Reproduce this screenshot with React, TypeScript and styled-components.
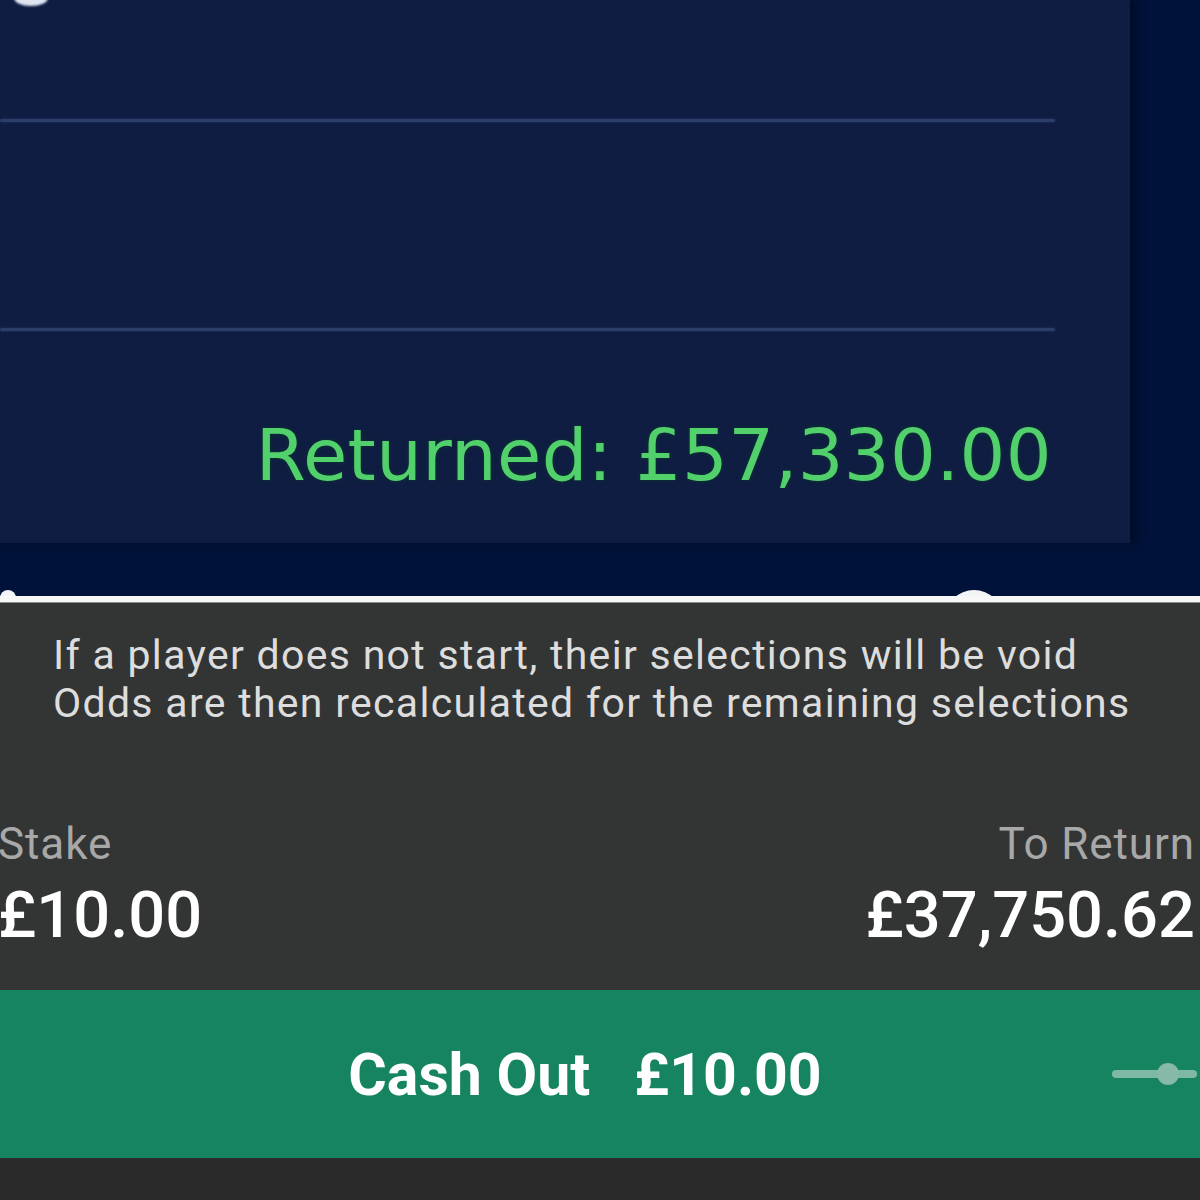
import styled, { createGlobalStyle } from 'styled-components';

const Global = createGlobalStyle`
    html, body {
        margin: 0;
        padding: 0;
        background: #2a2a2a;
    }
    #root {
        width: 1200px;
        height: 1200px;
        overflow: hidden;
    }
`

const Page = styled.div`
    display: flex;
    flex-direction: column;
    width: 1200px;
    height: 1200px;
`

/* upper half: the settled bet card on navy */
const NavyPane = styled.div`
    position: relative;
    display: flex;
    flex-direction: column;
    height: 596px;
    background: #001239;
    overflow: hidden;
`
const Card = styled.div`
    position: relative;
    display: flex;
    flex-direction: column;
    width: 1130px;
    height: 543px;
    background: #0f1d43;
    box-shadow: 6px 0 8px rgba(0, 6, 30, 0.6);
`
const Rule = styled.div<{ $top: number }>`
    margin-top: ${p => p.$top}px;
    margin-right: 75px;
    height: 3px;
    border-radius: 2px;
    background: #2d3d69;
    box-shadow: 0 0 3px rgba(60, 80, 130, 0.5);
`
const Returned = styled.div`
    margin-top: 82px;
    padding-right: 78px;
    text-align: right;
    font-family: "DejaVu Sans", Verdana, sans-serif;
    font-size: 72px;
    letter-spacing: 0.4px;
    color: #52d06c;
    text-shadow: 0 0 4px rgba(10, 60, 40, 0.9);
`
const CornerBlob = styled.div`
    position: absolute;
    left: 14px;
    top: -10px;
    width: 34px;
    height: 16px;
    border-radius: 50%;
    background: #dfe6f2;
    filter: blur(1px);
`
const PeekIcon = styled.div<{ $left: number; $size: number }>`
    position: absolute;
    left: ${p => p.$left}px;
    bottom: -${p => p.$size - 6}px;
    width: ${p => p.$size}px;
    height: ${p => p.$size}px;
    border-radius: 50%;
    background: #f2f4f8;
    filter: blur(0.6px);
`

const Divider = styled.div`
    height: 6px;
    background: #f7f7f7;
    border-bottom: 1px solid #8a8a8a;
`

/* lower half: bet slip summary */
const SlipPane = styled.div`
    display: flex;
    flex-direction: column;
    height: 387px;
    background: #333535;
    font-family: Roboto, "Liberation Sans", sans-serif;
`
const Notice = styled.p`
    margin: 28px 0 0 53px;
    font-size: 41px;
    line-height: 48px;
    letter-spacing: 1.3px;
    color: #dddddd;
`
const Figures = styled.div`
    display: flex;
    justify-content: space-between;
    margin: 92px 5px 0 -2px;
`
const Figure = styled.div<{ $align: 'left' | 'right' }>`
    display: flex;
    flex-direction: column;
    align-items: ${p => (p.$align === 'left' ? 'flex-start' : 'flex-end')};
`
const FigureLabel = styled.span`
    font-size: 44px;
    line-height: 50px;
    letter-spacing: 0.9px;
    color: #a8a8a8;
`
const FigureValue = styled.span`
    margin-top: 12px;
    font-size: 65px;
    line-height: 68px;
    font-weight: 500;
    color: #ffffff;
`

const CashOutBar = styled.div`
    position: relative;
    display: flex;
    align-items: center;
    justify-content: center;
    height: 168px;
    background: #178461;
    font-family: Roboto, "Liberation Sans", sans-serif;
`
const CashOutText = styled.span`
    margin-right: 30px;
    font-size: 59px;
    font-weight: 700;
    color: #ffffff;
    white-space: pre;
`
const Slider = styled.div`
    position: absolute;
    right: 3px;
    top: 50%;
    width: 85px;
    height: 8px;
    margin-top: -4px;
    border-radius: 4px;
    background: #7fb9a4;
`
const Knob = styled.div`
    position: absolute;
    left: 45px;
    top: -7px;
    width: 22px;
    height: 22px;
    border-radius: 50%;
    background: #86b9a7;
`
const Footer = styled.div`
    flex: 1;
    background: #2a2a2a;
`

export default function App() {
    return (
        <Page>
            <Global />
            <NavyPane>
                <Card>
                    <CornerBlob />
                    <Rule $top={119} />
                    <Rule $top={206} />
                    <Returned>Returned: £57,330.00</Returned>
                </Card>
                <PeekIcon $left={0} $size={16} />
                <PeekIcon $left={945} $size={58} />
            </NavyPane>
            <Divider />
            <SlipPane>
                <Notice>
                    If a player does not start, their selections will be void
                    <br />
                    Odds are then recalculated for the remaining selections
                </Notice>
                <Figures>
                    <Figure $align="left">
                        <FigureLabel>Stake</FigureLabel>
                        <FigureValue>£10.00</FigureValue>
                    </Figure>
                    <Figure $align="right">
                        <FigureLabel>To Return</FigureLabel>
                        <FigureValue>£37,750.62</FigureValue>
                    </Figure>
                </Figures>
            </SlipPane>
            <CashOutBar>
                <CashOutText>{'Cash Out   £10.00'}</CashOutText>
                <Slider>
                    <Knob />
                </Slider>
            </CashOutBar>
            <Footer />
        </Page>
    );
}
